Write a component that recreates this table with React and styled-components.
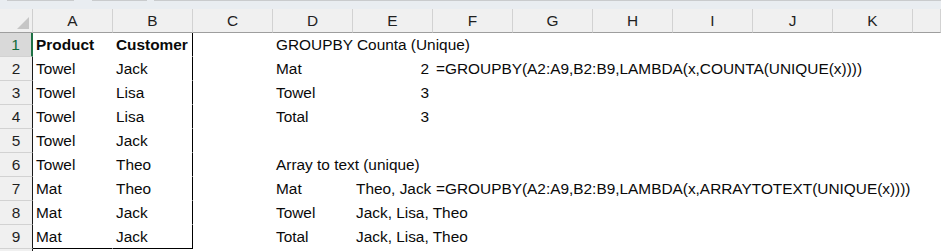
import React from "react";
import styled, { createGlobalStyle } from "styled-components";

const Global = createGlobalStyle`
  html, body {
    margin: 0;
    padding: 0;
    background: #ffffff;
    overflow: hidden;
  }
  body {
    font-family: "Liberation Sans", Arial, sans-serif;
  }
`;

const COLS = ["A", "B", "C", "D", "E", "F", "G", "H", "I", "J", "K", "L"];
const F1 = "=GROUPBY(A2:A9,B2:B9,LAMBDA(x,COUNTA(UNIQUE(x))))";
const F2 = "=GROUPBY(A2:A9,B2:B9,LAMBDA(x,ARRAYTOTEXT(UNIQUE(x))))";

// sparse cell data: row -> { col: value | { v, bold, right } }
const DATA = {
  1: { A: { v: "Product", bold: true }, B: { v: "Customer", bold: true }, D: "GROUPBY Counta (Unique)" },
  2: { A: "Towel", B: "Jack", D: "Mat", E: { v: "2", right: true }, F: F1 },
  3: { A: "Towel", B: "Lisa", D: "Towel", E: { v: "3", right: true } },
  4: { A: "Towel", B: "Lisa", D: "Total", E: { v: "3", right: true } },
  5: { A: "Towel", B: "Jack" },
  6: { A: "Towel", B: "Theo", D: "Array to text (unique)" },
  7: { A: "Mat", B: "Theo", D: "Mat", E: "Theo, Jack", F: F2 },
  8: { A: "Mat", B: "Jack", D: "Towel", E: "Jack, Lisa, Theo" },
  9: { A: "Mat", B: "Jack", D: "Total", E: "Jack, Lisa, Theo" },
  10: {},
};

const Ribbon = styled.div`
  height: 9px;
  background: #e9edf1;
  display: flex;
`;

const RibbonTab = styled.div`
  height: 0;
  border-top: 1px solid #c9cbcd;
  margin-left: ${(p) => p.$gap}px;
  width: ${(p) => (p.$w ? `${p.$w}px` : "auto")};
  flex: ${(p) => (p.$w ? "none" : 1)};
`;

const Sheet = styled.div`
  display: grid;
  grid-template-columns: 33px repeat(11, 80px) 1fr;
  grid-auto-rows: 24px;
  font-size: 15.4px;
  color: #0a0a0a;
`;

const Corner = styled.div`
  background: #f0f0f0;
  border-right: 1px solid #cfcfcf;
  border-bottom: 1px solid #9e9e9e;
  position: relative;
  &::after {
    content: "";
    position: absolute;
    right: 3px;
    bottom: 3px;
    border-style: solid;
    border-width: 0 0 12px 12px;
    border-color: transparent transparent #c6c6c6 transparent;
  }
`;

const ColHead = styled.div`
  background: #f0f0f0;
  border-right: 1px solid #d2d2d2;
  border-bottom: 1px solid #9e9e9e;
  display: flex;
  align-items: center;
  justify-content: center;
  color: #1f1f1f;
`;

const RowHead = styled.div`
  background: ${(p) => (p.$active ? "#d9d9d9" : "#f0f0f0")};
  border-bottom: 1px solid #d2d2d2;
  border-right: ${(p) => (p.$active ? "2px solid #1e7145" : "1px solid #1a1a1a")};
  display: flex;
  align-items: center;
  justify-content: center;
  color: ${(p) => (p.$active ? "#106b3b" : "#1f1f1f")};
`;

const Cell = styled.div`
  display: flex;
  align-items: center;
  justify-content: ${(p) => (p.$right ? "flex-end" : "flex-start")};
  padding: ${(p) => (p.$right ? "0 3px 0 0" : "0 0 0 3px")};
  white-space: nowrap;
  overflow: visible;
  font-weight: ${(p) => (p.$bold ? 700 : 400)};
  border-right: 1px solid ${(p) => (p.$edge ? "#000" : "transparent")};
  border-bottom: 1px solid ${(p) => (p.$base ? "#000" : "transparent")};
  min-width: 0;
  position: relative;
  z-index: ${(p) => p.$z};
`;

export default function App() {
  const rows = Object.keys(DATA).map(Number);
  return (
    <>
      <Global />
      <Ribbon>
        <RibbonTab $gap={7} $w={67} />
        <RibbonTab $gap={18} $w={55} />
        <RibbonTab $gap={7} />
      </Ribbon>
      <Sheet>
        <Corner />
        {COLS.map((c) => (
          <ColHead key={c}>{c === "L" ? "" : c}</ColHead>
        ))}
        {rows.map((r) => (
          <React.Fragment key={r}>
            {/* row 10 only peeks in at the bottom edge, its number is out of view */}
            <RowHead $active={r === 1}>{r < 10 ? r : ""}</RowHead>
            {COLS.map((c, i) => {
              const raw = DATA[r][c];
              const cell = typeof raw === "string" ? { v: raw } : raw || {};
              const inBox = r <= 9 && (c === "A" || c === "B");
              return (
                <Cell
                  key={c}
                  $bold={cell.bold}
                  $right={cell.right}
                  $edge={inBox && c === "B"}
                  $base={inBox && r === 9}
                  $z={20 - i}
                >
                  {cell.v}
                </Cell>
              );
            })}
          </React.Fragment>
        ))}
      </Sheet>
    </>
  );
}
